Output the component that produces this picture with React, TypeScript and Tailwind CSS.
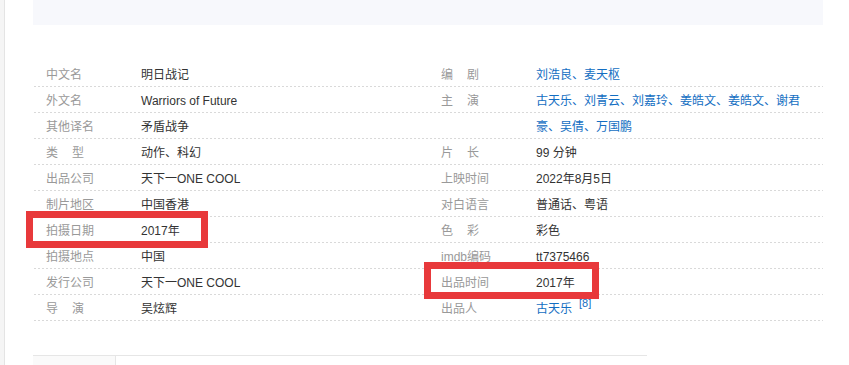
import React from 'react';

type Cell = { label: string; value: string; link?: boolean; sup?: string; spaced?: boolean };

const rows: [Cell, Cell][] = [
  [{ label: '中文名', value: '明日战记' }, { label: '编剧', value: '刘浩良、麦天枢', link: true, spaced: true }],
  [{ label: '外文名', value: 'Warriors of Future' }, { label: '主演', value: '古天乐、刘青云、刘嘉玲、姜皓文、姜皓文、谢君', link: true, spaced: true }],
  [{ label: '其他译名', value: '矛盾战争' }, { label: '', value: '豪、吴倩、万国鹏', link: true }],
  [{ label: '类型', value: '动作、科幻', spaced: true }, { label: '片长', value: '99 分钟', spaced: true }],
  [{ label: '出品公司', value: '天下一ONE COOL' }, { label: '上映时间', value: '2022年8月5日' }],
  [{ label: '制片地区', value: '中国香港' }, { label: '对白语言', value: '普通话、粤语' }],
  [{ label: '拍摄日期', value: '2017年' }, { label: '色彩', value: '彩色', spaced: true }],
  [{ label: '拍摄地点', value: '中国' }, { label: 'imdb编码', value: 'tt7375466' }],
  [{ label: '发行公司', value: '天下一ONE COOL' }, { label: '出品时间', value: '2017年' }],
  [{ label: '导演', value: '吴炫辉', spaced: true }, { label: '出品人', value: '古天乐', link: true, sup: '[8]' }],
];

const Label: React.FC<{ cell: Cell }> = ({ cell }) => {
  if (cell.spaced && cell.label.length === 2) {
    return (
      <span className="w-[95px] shrink-0 text-[#999]">
        <span className="mr-[14px]">{cell.label[0]}</span>
        {cell.label[1]}
      </span>
    );
  }
  return <span className="w-[95px] shrink-0 text-[#999]">{cell.label}</span>;
};

const Half: React.FC<{ cell: Cell }> = ({ cell }) => (
  <div className="flex w-[395px] pl-[13px]">
    <Label cell={cell} />
    <span className={cell.link ? 'text-[#136ec2] whitespace-nowrap' : 'text-[#333] whitespace-nowrap'}>
      {cell.value}
      {cell.sup && (
        <sup className="ml-[7px] text-[11px] text-[#136ec2] relative top-[-6px]">{cell.sup}</sup>
      )}
    </span>
  </div>
);

const App: React.FC = () => {
  return (
    <div
      className="relative flex w-[849px] h-[365px] overflow-hidden bg-white text-[12px] leading-[26px]"
      style={{ fontFamily: '"Liberation Sans", "Noto Sans CJK SC", sans-serif' }}
    >
      <div className="w-[5px] h-full shrink-0 bg-[#f5f5f5] border-r border-[#e4e4e4]" />
      <div className="flex flex-col items-start pl-[28px]">
        <div className="w-[790px] h-[25px] shrink-0 bg-[#f7f8fc]" />
        <div className="mt-[36px] w-[790px] shrink-0">
          {rows.map(([l, r], i) => (
            <div
              key={i}
              className="flex h-[26px] pt-[1px] bg-[linear-gradient(to_right,#d9d9d9_50%,transparent_50%)] bg-[length:4px_1px] bg-repeat-x bg-bottom"
            >
              <Half cell={l} />
              <Half cell={r} />
            </div>
          ))}
        </div>
        <div className="mt-[34px] flex w-[614px] shrink-0 border-t border-[#e6e6e6]">
          <div className="w-[83px] h-[12px] bg-[#fafafa] border-r border-[#e6e6e6]" />
        </div>
      </div>
      <div className="absolute left-[26px] top-[211px] w-[182px] h-[37px] border-[7px] border-[#e8393b]" />
      <div className="absolute left-[424px] top-[262px] w-[175px] h-[37px] border-[7px] border-[#e8393b]" />
    </div>
  );
};

export default App;
